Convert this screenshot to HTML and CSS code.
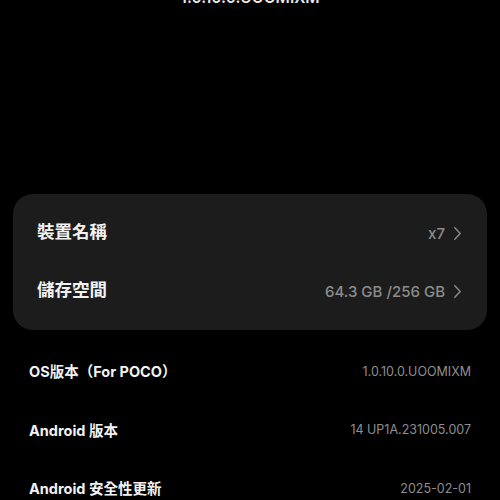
FILE: index.html
```html
<!DOCTYPE html>
<html>
<head>
<meta charset="utf-8">
<link rel="stylesheet" href="styles.css">
</head>
<body>
<div class="top"><span class="top-text">1.0.10.0.UOOMIXM</span></div>
<div class="card">
  <div class="crow">
    <span class="clabel">裝置名稱</span>
    <span class="cval">x7<svg class="chev" viewBox="0 0 10 16" width="9" height="15"><path d="M2 1.5 L8 8 L2 14.5" fill="none" stroke="#8a8a8a" stroke-width="1.6" stroke-linecap="round" stroke-linejoin="round"/></svg></span>
  </div>
  <div class="crow">
    <span class="clabel">儲存空間</span>
    <span class="cval">64.3 GB /256 GB<svg class="chev" viewBox="0 0 10 16" width="9" height="15"><path d="M2 1.5 L8 8 L2 14.5" fill="none" stroke="#8a8a8a" stroke-width="1.6" stroke-linecap="round" stroke-linejoin="round"/></svg></span>
  </div>
</div>
<div class="list">
  <div class="lrow"><span class="llabel">OS版本（For POCO）</span><span class="lval">1.0.10.0.UOOMIXM</span></div>
  <div class="lrow"><span class="llabel">Android 版本</span><span class="lval">14 UP1A.231005.007</span></div>
  <div class="lrow"><span class="llabel">Android 安全性更新</span><span class="lval">2025-02-01</span></div>
</div>
</body>
</html>
```
FILE: styles.css
```css
html, body {
  margin: 0;
  padding: 0;
  background: #000;
  width: 500px;
  height: 500px;
  overflow: hidden;
  font-family: "Inter", "Noto Sans CJK TC", sans-serif;
}
.top {
  height: 5px;
  overflow: hidden;
  display: flex;
  justify-content: center;
  align-items: flex-end;
}
.top-text {
  color: #e8e8e8;
  font-size: 15.5px;
  font-weight: 600;
  line-height: 1;
  display: block;
}
.card {
  margin: 189px 13px 0;
  background: #1c1c1c;
  border-radius: 20px;
  padding: 10px 0;
}
.crow {
  height: 58px;
  display: flex;
  align-items: center;
  justify-content: space-between;
  padding: 0 25px 0 24px;
}
.clabel {
  color: #f2f2f2;
  font-size: 17.5px;
  font-weight: 700;
  line-height: 1.4;
  padding-bottom: 3px;
  font-family: "Noto Sans CJK TC", sans-serif;
}
.cval {
  color: #8c8c8c;
  font-size: 15px;
  font-weight: 500;
  display: flex;
  align-items: center;
  gap: 8px;
}
.chev { display: block; }
.list {
  margin-top: 12px;
}
.lrow {
  height: 58.5px;
  display: flex;
  align-items: center;
  justify-content: space-between;
  padding: 0 29px;
}
.llabel {
  color: #f2f2f2;
  font-size: 14.5px;
  font-weight: 700;
  padding-bottom: 1px;
}
.lval {
  color: #8e8e8e;
  font-size: 12.5px;
  font-weight: 400;
}
```
